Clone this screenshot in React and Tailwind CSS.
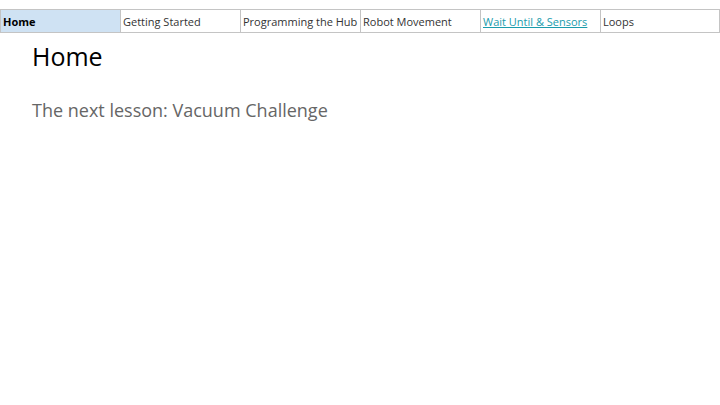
export default function App() {
  const cells = [
    { t: "Home", bold: true },
    { t: "Getting Started" },
    { t: "Programming the Hub" },
    { t: "Robot Movement" },
    { t: "Wait Until & Sensors", link: true },
    { t: "Loops" },
  ];
  return (
    <div className="w-[720px] h-[405px] bg-white font-['Open_Sans',sans-serif] overflow-hidden">
      <div className="pt-[9px]">
        <div className="flex w-[720px] border-y border-[#c4c4c4]">
          {cells.map((c, i) => (
            <div
              key={i}
              className={`w-[120px] shrink-0 h-[22px] pl-[2px] flex items-center whitespace-nowrap text-[11px] leading-none border-l border-[#c4c4c4] ${i === 5 ? "border-r" : ""} ${c.bold ? "bg-[#cfe2f3] font-bold text-black" : "text-[#333]"}`}
            >
              {c.link ? (
                <span className="text-[#1a9cac] underline">{c.t}</span>
              ) : (
                c.t
              )}
            </div>
          ))}
        </div>
      </div>
      <div className="px-8">
        <h1 className="text-[25px] leading-none mt-[11px] text-black">Home</h1>
        <p className="text-[18px] leading-none mt-[32px] text-[#666]">The next lesson: Vacuum Challenge</p>
      </div>
    </div>
  );
}
